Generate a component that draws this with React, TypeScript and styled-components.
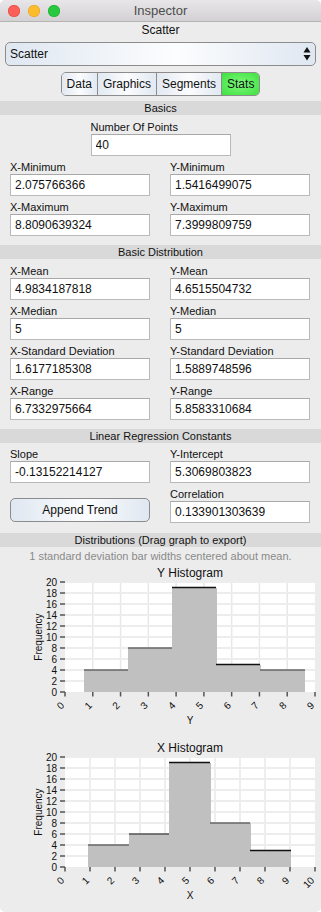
import React from 'react'
import styled, { createGlobalStyle } from 'styled-components'

type Bar = { from: number; to: number; count: number; edge: string }

const yBars: Bar[] = [
  { from: 0.679, to: 2.268, count: 4, edge: '#666' },
  { from: 2.268, to: 3.857, count: 8, edge: '#666' },
  { from: 3.857, to: 5.446, count: 19, edge: '#111' },
  { from: 5.446, to: 7.035, count: 5, edge: '#111' },
  { from: 7.035, to: 8.624, count: 4, edge: '#666' },
]

const xBars: Bar[] = [
  { from: 0.939, to: 2.557, count: 4, edge: '#666' },
  { from: 2.557, to: 4.175, count: 6, edge: '#555' },
  { from: 4.175, to: 5.792, count: 19, edge: '#111' },
  { from: 5.792, to: 7.41, count: 8, edge: '#666' },
  { from: 7.41, to: 9.028, count: 3, edge: '#111' },
]

const PL = 65
const PR = 315
const PT = 19
const PB = 129

const Histogram = ({ title, axis, max, bars }: { title: string; axis: string; max: number; bars: Bar[] }) => {
  const sx = (v: number) => PL + (v / max) * (PR - PL)
  const sy = (v: number) => PB - v * 5.5
  const xs = Array.from({ length: max + 1 }, (_, i) => i)
  const ys = Array.from({ length: 11 }, (_, i) => i * 2)
  return (
    <Chart width={321} height={175} viewBox="0 0 321 175">
      <ChartTitle x={190} y={14}>{title}</ChartTitle>
      <rect x={PL} y={PT} width={PR - PL} height={PB - PT} fill="#fff" />
      {xs.slice(1, -1).map((i) => (
        <line key={'gx' + i} x1={sx(i)} x2={sx(i)} y1={PT} y2={PB} stroke="#e8e8e8" strokeWidth={1.5} />
      ))}
      {ys.slice(1).map((v) => (
        <line key={'gy' + v} x1={PL} x2={PR} y1={sy(v)} y2={sy(v)} stroke="#ededed" strokeWidth={2} />
      ))}
      {bars.map((b, i) => (
        <rect
          key={'b' + i}
          x={Math.round(sx(b.from))}
          y={sy(b.count)}
          width={Math.round(sx(b.to)) - Math.round(sx(b.from)) + (i < bars.length - 1 ? 1 : 0)}
          height={b.count * 5.5}
          fill="#c0c0c0"
          shapeRendering="crispEdges"
        />
      ))}
      {bars.map((b, i) => (
        <line key={'e' + i} x1={Math.round(sx(b.from))} x2={Math.round(sx(b.to))} y1={sy(b.count)} y2={sy(b.count)} stroke={b.edge} strokeWidth={1.5} />
      ))}
      {ys.map((v) => (
        <g key={'ty' + v}>
          <line x1={60} x2={65} y1={sy(v)} y2={sy(v)} stroke="#555" strokeWidth={1.5} />
          <TickText x={57} y={sy(v) + 3.6} textAnchor="end">{v}</TickText>
        </g>
      ))}
      {xs.map((i) => (
        <g key={'tx' + i}>
          <line x1={sx(i)} x2={sx(i)} y1={PB} y2={PB + 4.5} stroke="#555" strokeWidth={1.5} />
          <TickText textAnchor="end" transform={`translate(${sx(i)} ${PB + 14}) rotate(-45)`}>{i}</TickText>
        </g>
      ))}
      <AxisText textAnchor="middle" transform={`translate(42 ${(PT + PB) / 2}) rotate(-90)`}>Frequency</AxisText>
      <AxisText x={190} y={161} textAnchor="middle" fontSize={11}>{axis}</AxisText>
    </Chart>
  )
}

const Field = ({ label, value }: { label: string; value: string }) => (
  <FieldBox>
    <Label>{label}</Label>
    <Input readOnly value={value} />
  </FieldBox>
)

const App = () => {
  return (
    <Window>
      <GlobalStyle />
      <TitleBar>
        <Lights>
          <Light $fill="#fc5f57" $ring="#e0443e" />
          <Light $fill="#fdbc2e" $ring="#dea123" />
          <Light $fill="#28c840" $ring="#1aab29" />
        </Lights>
        <Title>Inspector</Title>
        <span />
      </TitleBar>
      <Caption>Scatter</Caption>
      <Select>
        <span>Scatter</span>
        <svg width="8" height="14" viewBox="0 0 8 14">
          <path d="M4 0 L7.5 5.5 L0.5 5.5 Z" fill="#111" />
          <path d="M0.5 8 L7.5 8 L4 13.5 Z" fill="#111" />
        </svg>
      </Select>
      <Tabs>
        <Tab>Data</Tab>
        <Tab>Graphics</Tab>
        <Tab>Segments</Tab>
        <Tab $active>Stats</Tab>
      </Tabs>

      <Band>Basics</Band>
      <Center>
        <Field label="Number Of Points" value="40" />
      </Center>
      <Pairs $top={4}>
        <Field label="X-Minimum" value="2.075766366" />
        <Field label="Y-Minimum" value="1.5416499075" />
        <Field label="X-Maximum" value="8.8090639324" />
        <Field label="Y-Maximum" value="7.3999809759" />
      </Pairs>

      <Band $top={9}>Basic Distribution</Band>
      <Pairs $top={5}>
        <Field label="X-Mean" value="4.9834187818" />
        <Field label="Y-Mean" value="4.6515504732" />
        <Field label="X-Median" value="5" />
        <Field label="Y-Median" value="5" />
        <Field label="X-Standard Deviation" value="1.6177185308" />
        <Field label="Y-Standard Deviation" value="1.5889748596" />
        <Field label="X-Range" value="6.7332975664" />
        <Field label="Y-Range" value="5.8583310684" />
      </Pairs>

      <Band $top={9}>Linear Regression Constants</Band>
      <Pairs $top={4}>
        <Field label="Slope" value="-0.13152214127" />
        <Field label="Y-Intercept" value="5.3069803823" />
        <ButtonCell>
          <Button>Append Trend</Button>
        </ButtonCell>
        <Field label="Correlation" value="0.133901303639" />
      </Pairs>

      <Band $top={10}>Distributions (Drag graph to export)</Band>
      <Note>1 standard deviation bar widths centered about mean.</Note>
      <Histogram title="Y Histogram" axis="Y" max={9} bars={yBars} />
      <Histogram title="X Histogram" axis="X" max={10} bars={xBars} />
    </Window>
  )
}

export default App

const GlobalStyle = createGlobalStyle`
  html, body { margin: 0; padding: 0; background: #ffffff; }
  * { box-sizing: border-box; }
`

const Window = styled.div`
  width: 321px;
  height: 912px;
  overflow: hidden;
  display: flex;
  flex-direction: column;
  background: #ececec;
  border-radius: 5px;
  font-family: "Liberation Sans", Arial, sans-serif;
  color: #111;
`

const TitleBar = styled.div`
  height: 22px;
  flex-shrink: 0;
  display: grid;
  grid-template-columns: 1fr auto 1fr;
  align-items: center;
  background: linear-gradient(#e8e6e8, #d3d1d3);
  border-bottom: 1px solid #b4b4b4;
  border-radius: 5px 5px 0 0;
`

const Lights = styled.div`
  display: flex;
  gap: 8px;
  padding-left: 8px;
`

const Light = styled.span<{ $fill: string; $ring: string }>`
  width: 12px;
  height: 12px;
  border-radius: 50%;
  background: ${(p) => p.$fill};
  box-shadow: inset 0 0 0 0.5px ${(p) => p.$ring};
`

const Title = styled.div`
  font-size: 13px;
  color: #4d4d4d;
`

const Caption = styled.div`
  margin-top: 1px;
  font-size: 12px;
  line-height: 14px;
  text-align: center;
`

const Select = styled.div`
  margin: 5px 5px 0;
  height: 24px;
  flex-shrink: 0;
  display: flex;
  align-items: center;
  justify-content: space-between;
  padding: 0 4px 0 4px;
  font-size: 12px;
  border: 1px solid #8c8c8c;
  border-radius: 5px;
  background: linear-gradient(90deg, #dfe7f1, #fcfdfe 55%, #dfe7f1);
`

const Tabs = styled.div`
  margin: 6px auto 0;
  height: 24px;
  flex-shrink: 0;
  display: flex;
  border: 1px solid #8c8c8c;
  border-radius: 5px;
  overflow: hidden;
`

const Tab = styled.div<{ $active?: boolean }>`
  display: flex;
  align-items: center;
  padding: 0 5px;
  font-size: 12px;
  border-right: 1px solid #8c8c8c;
  background: ${(p) =>
    p.$active
      ? 'radial-gradient(ellipse at center, #7dfa7d, #3fe03f)'
      : 'linear-gradient(90deg, #e2e9f2, #fbfcfd 50%, #e2e9f2)'};
  &:last-child {
    border-right: none;
  }
`

const Band = styled.div<{ $top?: number }>`
  margin-top: ${(p) => p.$top ?? 5}px;
  height: 14px;
  flex-shrink: 0;
  line-height: 14px;
  font-size: 11px;
  text-align: center;
  background: #d9d9d9;
`

const Center = styled.div`
  margin-top: 5px;
  display: flex;
  justify-content: center;
`

const Pairs = styled.div<{ $top: number }>`
  margin-top: ${(p) => p.$top}px;
  padding-left: 10px;
  display: grid;
  grid-template-columns: 140px 140px;
  column-gap: 20px;
  row-gap: 4px;
`

const FieldBox = styled.div`
  width: 140px;
  display: flex;
  flex-direction: column;
`

const Label = styled.div`
  height: 14px;
  line-height: 14px;
  font-size: 11px;
  white-space: nowrap;
`

const Input = styled.input`
  height: 22px;
  width: 100%;
  margin: 0;
  padding: 0 4px;
  font: 12px "Liberation Sans", Arial, sans-serif;
  color: #111;
  background: #fff;
  border: 1px solid #b9b9b9;
  border-top-color: #a8a8a8;
  outline: none;
`

const ButtonCell = styled.div`
  display: flex;
  align-items: flex-end;
  padding-bottom: 1px;
`

const Button = styled.div`
  width: 140px;
  height: 24px;
  display: flex;
  align-items: center;
  justify-content: center;
  font-size: 12px;
  border: 1px solid #8c8c8c;
  border-radius: 5px;
  background: linear-gradient(90deg, #dfe7f1, #fcfdfe 55%, #dfe7f1);
`

const Note = styled.div`
  margin-top: 2px;
  height: 14px;
  line-height: 14px;
  font-size: 11px;
  color: #8a8a8a;
  text-align: center;
`

const Chart = styled.svg`
  display: block;
  flex-shrink: 0;
  font-family: "Liberation Sans", Arial, sans-serif;
`

const ChartTitle = styled.text`
  font-size: 12px;
  fill: #111;
  text-anchor: middle;
`

const TickText = styled.text`
  font-size: 10px;
  fill: #111;
`

const AxisText = styled.text`
  font-size: 10px;
  fill: #111;
`
